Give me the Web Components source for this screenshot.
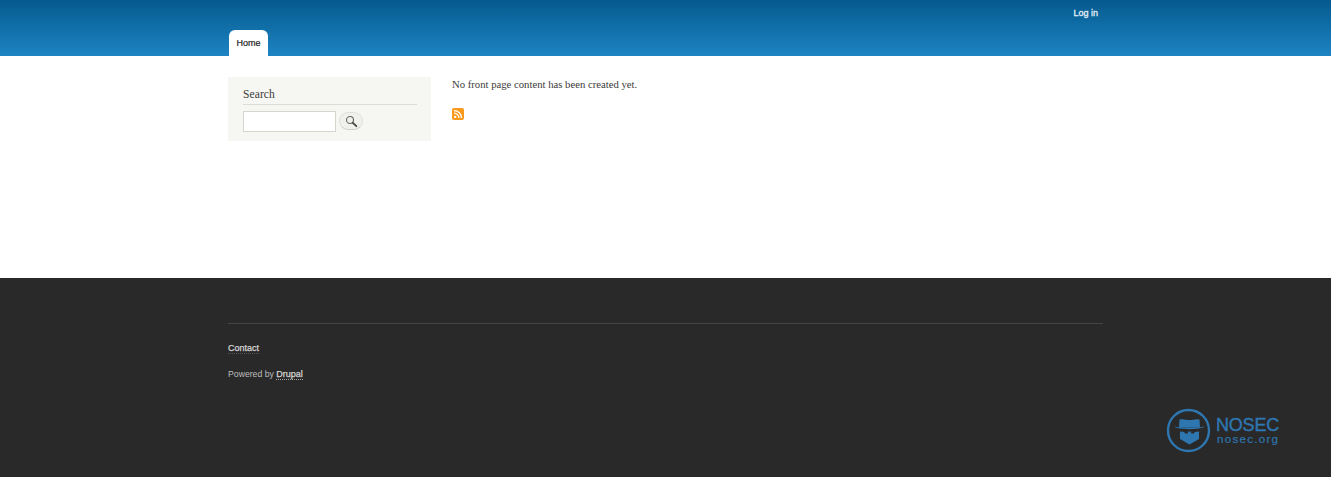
<!DOCTYPE html>
<html>
<head>
<meta charset="utf-8">
<title>Home</title>
<style>
  html, body { margin: 0; padding: 0; height: 100%; }
  body { font-family: "Liberation Serif", serif; background: #292929; }
</style>
</head>
<body>
<site-page>
  <site-header></site-header>
  <site-main>
    <search-block slot="sidebar"></search-block>
    <front-content></front-content>
  </site-main>
  <site-footer></site-footer>
</site-page>

<script>
class SitePage extends HTMLElement {
  constructor() {
    super();
    this.attachShadow({ mode: "open" }).innerHTML = `
      <style>
        :host { display: flex; flex-direction: column; height: 477px; overflow: hidden; }
      </style>
      <slot></slot>
    `;
  }
}

class SiteHeader extends HTMLElement {
  constructor() {
    super();
    this.attachShadow({ mode: "open" }).innerHTML = `
      <style>
        :host {
          display: block;
          height: 56px;
          box-sizing: border-box;
          background: linear-gradient(to bottom, #055a8e, #1d84c3);
          font-family: "Liberation Sans", Arial, sans-serif;
        }
        .wrap {
          width: 875px;
          height: 56px;
          margin: 0 auto;
          display: flex;
          flex-direction: column;
          justify-content: space-between;
        }
        .secondary {
          display: flex;
          justify-content: flex-end;
          padding: 8px 5px 0 0;
        }
        .secondary a {
          font-size: 9px;
          line-height: 11px;
          color: #e4eef6;
          text-decoration: none;
          -webkit-text-stroke: 0.3px #e4eef6;
        }
        .tabs { display: flex; padding-left: 1px; }
        .tab {
          width: 39px;
          height: 26px;
          box-sizing: border-box;
          background: #fff;
          border-radius: 6px 6px 0 0;
          color: #222;
          font-size: 9px;
          line-height: 26px;
          text-align: center;
          text-decoration: none;
          -webkit-text-stroke: 0.2px #222;
        }
      </style>
      <div class="wrap">
        <div class="secondary"><a href="#">Log in</a></div>
        <div class="tabs"><a class="tab" href="#">Home</a></div>
      </div>
    `;
  }
}

class SiteMain extends HTMLElement {
  constructor() {
    super();
    this.attachShadow({ mode: "open" }).innerHTML = `
      <style>
        :host { display: block; height: 222px; background: #fff; }
        .wrap {
          width: 875px;
          margin: 0 auto;
          padding-top: 21px;
          display: grid;
          grid-template-columns: 203px 1fr;
          column-gap: 21px;
        }
      </style>
      <div class="wrap">
        <slot name="sidebar"></slot>
        <slot></slot>
      </div>
    `;
  }
}

class SearchBlock extends HTMLElement {
  constructor() {
    super();
    this.attachShadow({ mode: "open" }).innerHTML = `
      <style>
        :host {
          display: block;
          height: 64px;
          box-sizing: border-box;
          background: #f6f6f2;
          padding: 10px 14px 0 15px;
        }
        h2 {
          margin: 0;
          height: 17px;
          font-size: 11.5px;
          line-height: 14px;
          font-weight: normal;
          color: #3b3b3b;
          border-bottom: 1px solid #dcdcd8;
          letter-spacing: 0.1px;
        }
        form { display: flex; align-items: flex-start; gap: 3px; margin-top: 6px; }
        input {
          width: 93px;
          height: 21px;
          box-sizing: border-box;
          margin: 0;
          padding: 0 2px;
          background: #fff;
          border: 1px solid #d6d6ce;
        }
        button {
          width: 24px;
          height: 18px;
          margin: 1px 0 0;
          padding: 0;
          display: flex;
          align-items: center;
          justify-content: center;
          background: #f0f0ec;
          border: 1px solid #e0e0dc;
          border-bottom-color: #cfcfca;
          border-radius: 10px;
        }
      </style>
      <h2>Search</h2>
      <form onsubmit="return false">
        <input type="text" aria-label="Search">
        <button aria-label="Search">
          <svg width="13" height="13" viewBox="0 0 13 13" fill="none">
            <circle cx="5" cy="5" r="3.5" stroke="#666" stroke-width="1.1"/>
            <path d="M7.8 7.8 L11.4 11.2" stroke="#444" stroke-width="1.8" stroke-linecap="round"/>
          </svg>
        </button>
      </form>
    `;
  }
}

class FrontContent extends HTMLElement {
  constructor() {
    super();
    this.attachShadow({ mode: "open" }).innerHTML = `
      <style>
        :host { display: block; color: #3b3b3b; }
        p {
          margin: 0;
          font-size: 10.7px;
          line-height: 14px;
        }
        a { display: block; width: 12px; height: 12px; margin-top: 17px; }
        svg { display: block; }
      </style>
      <p>No front page content has been created yet.</p>
      <a href="#" aria-label="Feed">
        <svg width="12" height="12" viewBox="0 0 12 12">
          <rect width="12" height="12" rx="2" fill="#f99a1c"/>
          <circle cx="3.2" cy="8.9" r="1.2" fill="#fff"/>
          <path d="M2 5.2 A4.9 4.9 0 0 1 6.9 10.1" stroke="#fff" stroke-width="1.3" fill="none"/>
          <path d="M2 2.6 A7.5 7.5 0 0 1 9.5 10.1" stroke="#fff" stroke-width="1.3" fill="none"/>
        </svg>
      </a>
    `;
  }
}

class SiteFooter extends HTMLElement {
  constructor() {
    super();
    this.attachShadow({ mode: "open" }).innerHTML = `
      <style>
        :host {
          display: block;
          position: relative;
          flex: 1;
          background: #292929;
          color: #bdbdbd;
          font-family: "Liberation Sans", Arial, sans-serif;
          font-size: 9px;
        }
        .wrap { width: 875px; margin: 0 auto; padding-top: 45px; }
        .menu {
          border-top: 1px solid #444;
          padding-top: 19px;
          line-height: 11px;
        }
        .menu a {
          color: #d5d5d5;
          text-decoration: none;
          border-bottom: 1px dotted #555;
          -webkit-text-stroke: 0.25px #d5d5d5;
        }
        .powered { margin-top: 15px; line-height: 11px; font-size: 8.7px; }
        .powered a {
          color: #d5d5d5;
          font-size: 9px;
          text-decoration: none;
          border-bottom: 1px dotted #aaa;
          -webkit-text-stroke: 0.25px #d5d5d5;
        }
        .logo {
          position: absolute;
          left: 1166px;
          top: 130px;
          display: flex;
          align-items: center;
          gap: 5px;
          color: #2e76b0;
        }
        .logo svg { display: block; }
        .name { font-size: 18px; line-height: 17px; letter-spacing: -0.2px; -webkit-text-stroke: 0.4px #2e76b0; }
        .org { font-size: 11.5px; line-height: 11px; letter-spacing: 1.3px; -webkit-text-stroke: 0.2px #2e76b0; padding-left: 1px; }
      </style>
      <div class="wrap">
        <div class="menu"><a href="#">Contact</a></div>
        <div class="powered">Powered by <a href="#">Drupal</a></div>
      </div>
      <div class="logo">
        <svg width="45" height="45" viewBox="0 0 45 45">
          <circle cx="22.5" cy="22.5" r="20.5" fill="none" stroke="#2e76b0" stroke-width="2.4"/>
          <path d="M8 18.5 C14 20 33 20 39 18.5 C35 22 12 22 8 18.5 Z" fill="#2e76b0"/>
          <path d="M13 19.5 L13.5 11.5 C17 10.5 20 12 23.5 12 C27 12 30 10.5 33.5 11.5 L34 19.5 Z" fill="#2e76b0"/>
          <path d="M14 23.5 C17 24 20 24 23.5 23.5 C27 24 30 24 33 23.5 L33 31 L23.500 36.5 L14 31 Z" fill="#2e76b0"/>
          <path d="M18 23.5 H22.5 L21.500 25.500 H19 Z M24.500 23.500 H29 L28 25.500 H25.500 Z" fill="#292929"/>
        </svg>
        <div>
          <div class="name">NOSEC</div>
          <div class="org">nosec.org</div>
        </div>
      </div>
    `;
  }
}

customElements.define("site-page", SitePage);
customElements.define("site-header", SiteHeader);
customElements.define("site-main", SiteMain);
customElements.define("search-block", SearchBlock);
customElements.define("front-content", FrontContent);
customElements.define("site-footer", SiteFooter);
</script>
</body>
</html>
